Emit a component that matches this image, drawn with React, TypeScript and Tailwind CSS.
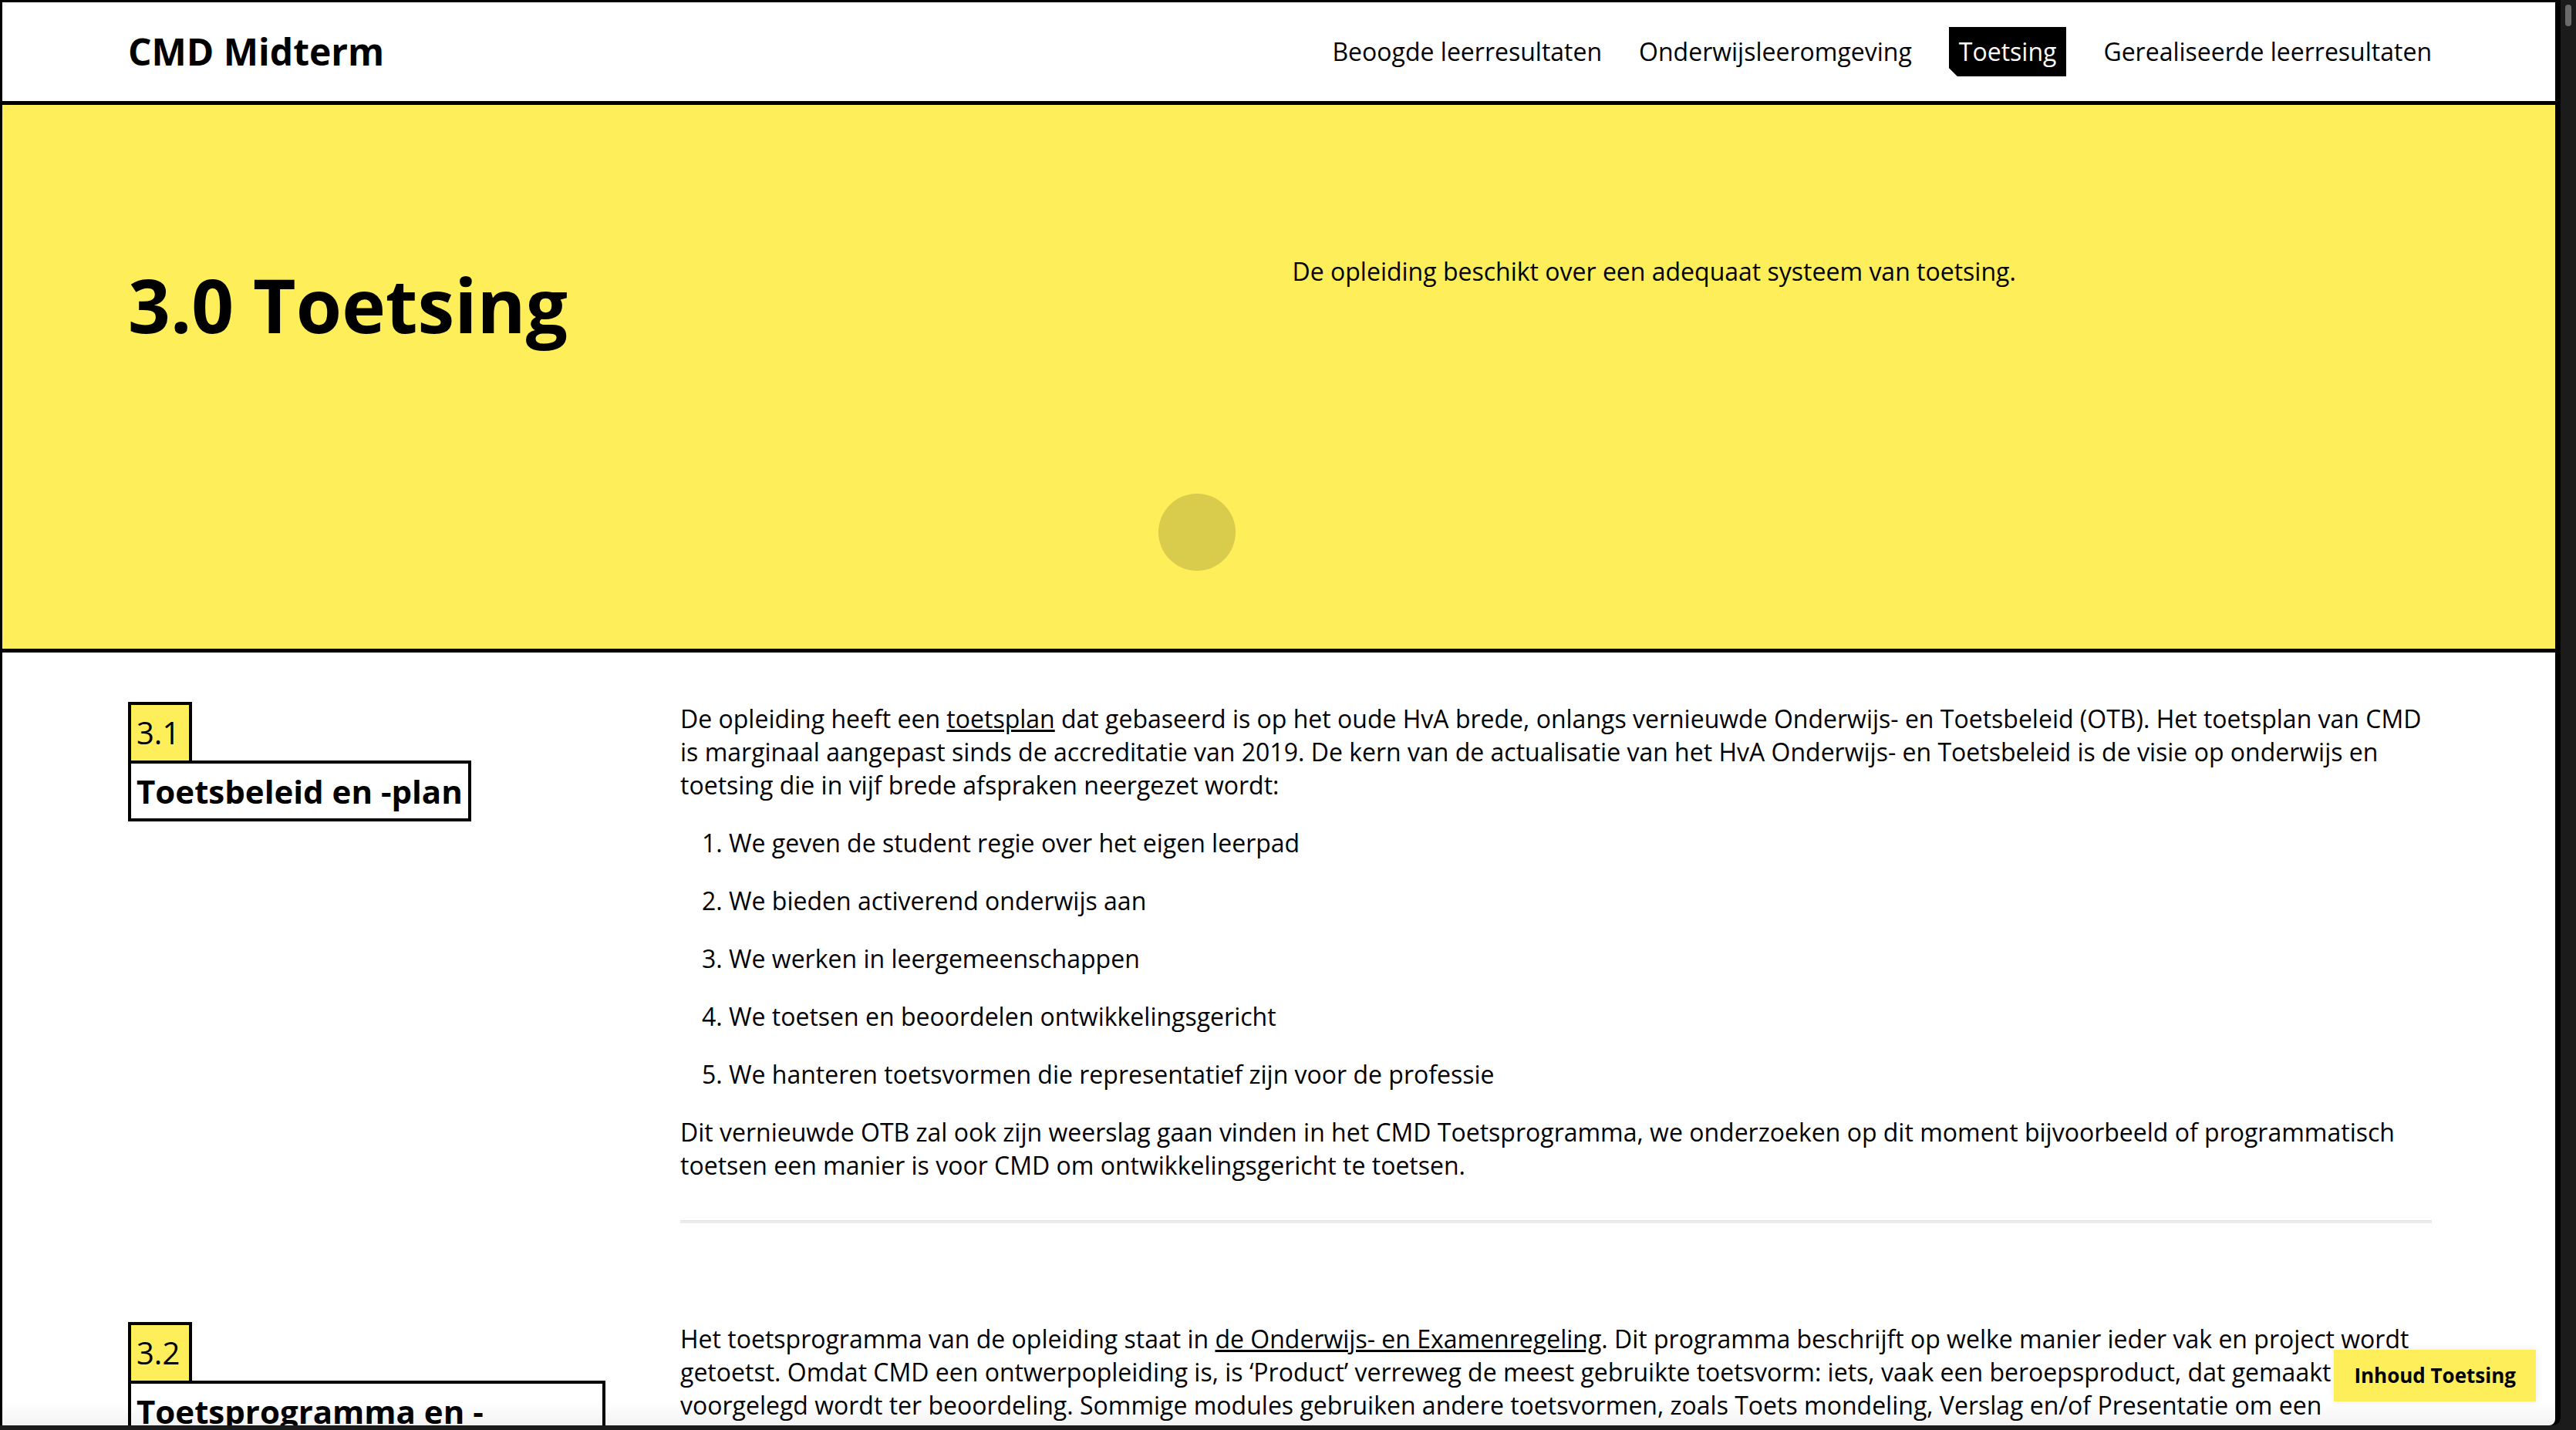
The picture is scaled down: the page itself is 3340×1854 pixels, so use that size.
export default function App() {
  return (
    <div className="relative w-[3340px] h-[1854px] bg-[#1b1b1b] overflow-hidden font-['Open_Sans',sans-serif] text-black">
      {/* scrollbar thumb of the window chrome */}
      <div className="absolute top-[6px] right-[6px] w-[8px] h-[28px] rounded-full bg-[#6b6b6b]" />

      <div className="w-[3320px] h-[1848px] bg-black pt-[3px] pl-[3px] pr-[7px] rounded-br-[10px]">
        <div className="relative w-[3310px] h-[1845px] bg-white overflow-hidden rounded-br-[8px]">
          {/* header */}
          <header className="h-[133px] border-b-[5px] border-black flex items-center justify-between pl-[163px] pr-[160px]">
            <div className="text-[48px] font-bold leading-[64px]">CMD Midterm</div>
            <nav className="flex items-center gap-[48px] text-[32px] leading-[48px]">
              <a className="py-[8px]">Beoogde leerresultaten</a>
              <a className="py-[8px]">Onderwijsleeromgeving</a>
              <a className="py-[8px] px-[13px] bg-black text-white [clip-path:polygon(0_0,100%_0,100%_100%,11px_100%,0_calc(100%_-_11px))]">
                Toetsing
              </a>
              <a className="py-[8px]">Gerealiseerde leerresultaten</a>
            </nav>
          </header>

          {/* hero */}
          <section className="relative h-[710px] border-b-[5px] border-black bg-[#fdee5a]">
            <div className="grid grid-cols-2 gap-[32px] pt-[192px] pl-[163px] pr-[160px] items-start">
              <h1 className="text-[96px] font-bold leading-[134px]">3.0 Toetsing</h1>
              <p className="text-[32px] leading-[48px]">De opleiding beschikt over een adequaat systeem van toetsing.</p>
            </div>
            <div className="absolute left-[1499px] top-[504px] w-[100px] h-[100px] rounded-full bg-[#d9cc4c]" />
          </section>

          {/* 3.1 */}
          <section className="grid grid-cols-[619px_1fr] gap-x-[97px] py-[64px] pl-[163px] pr-[160px]">
            <div className="flex flex-col items-start">
              <div className="border-[4px] border-black bg-[#fdee5a] pl-[7px] pr-[12px] py-[8px] text-[40px] leading-[56px]">3.1</div>
              <h2 className="-mt-[4px] max-w-full border-[4px] border-black bg-white px-[7px] py-[6px] text-[42px] font-bold leading-[59px]">
                Toetsbeleid en -plan
              </h2>
            </div>
            <div className="text-[32px] leading-[43px]">
              <p className="mb-[32px]">
                De opleiding heeft een <a className="underline">toetsplan</a> dat gebaseerd is op het oude HvA brede, onlangs
                vernieuwde Onderwijs- en Toetsbeleid (OTB). Het toetsplan van CMD is marginaal aangepast sinds de accreditatie
                van 2019. De kern van de actualisatie van het HvA Onderwijs- en Toetsbeleid is de visie op onderwijs en toetsing
                die in vijf brede afspraken neergezet wordt:
              </p>
              <ol className="list-decimal list-outside pl-[63px]">
                <li className="mb-[32px]">We geven de student regie over het eigen leerpad</li>
                <li className="mb-[32px]">We bieden activerend onderwijs aan</li>
                <li className="mb-[32px]">We werken in leergemeenschappen</li>
                <li className="mb-[32px]">We toetsen en beoordelen ontwikkelingsgericht</li>
                <li className="mb-[32px]">We hanteren toetsvormen die representatief zijn voor de professie</li>
              </ol>
              <p>
                Dit vernieuwde OTB zal ook zijn weerslag gaan vinden in het CMD Toetsprogramma, we onderzoeken op dit moment
                bijvoorbeeld of programmatisch toetsen een manier is voor CMD om ontwikkelingsgericht te toetsen.
              </p>
              <div className="mt-[50px] h-[4px] bg-[#ececec] border-t border-[#e2e2e2]" />
            </div>
          </section>

          {/* 3.2 */}
          <section className="grid grid-cols-[619px_1fr] gap-x-[97px] py-[64px] pl-[163px] pr-[160px]">
            <div className="flex flex-col items-start">
              <div className="border-[4px] border-black bg-[#fdee5a] pl-[7px] pr-[12px] py-[8px] text-[40px] leading-[56px]">3.2</div>
              <h2 className="-mt-[4px] w-full border-[4px] border-black bg-white px-[7px] py-[6px] text-[42px] font-bold leading-[59px]">
                Toetsprogramma en -<br />organisatie
              </h2>
            </div>
            <div className="text-[32px] leading-[43px]">
              <p>
                Het toetsprogramma van de opleiding staat in <a className="underline">de Onderwijs- en Examenregeling</a>. Dit
                programma beschrijft op welke manier ieder vak en project wordt getoetst. Omdat CMD een ontwerpopleiding is, is
                ‘Product’ verreweg de meest gebruikte toetsvorm: iets, vaak een beroepsproduct, dat gemaakt en voorgelegd wordt
                ter beoordeling. Sommige modules gebruiken andere toetsvormen, zoals Toets mondeling, Verslag en/of Presentatie
                om een leeruitkomst aan te tonen.
              </p>
            </div>
          </section>

          {/* faint fade at the bottom edge */}
          <div className="pointer-events-none absolute bottom-0 left-0 right-0 h-[30px] bg-linear-to-b from-transparent to-black/5" />

          {/* floating table of contents button */}
          <button className="absolute right-[25px] bottom-[31px] bg-[#fdee5a] px-[26px] py-[16px] text-[26px] font-bold leading-[35px] shadow-[0_0_10px_rgba(0,0,0,0.08)]">
            Inhoud Toetsing
          </button>
        </div>
      </div>
    </div>
  );
}
